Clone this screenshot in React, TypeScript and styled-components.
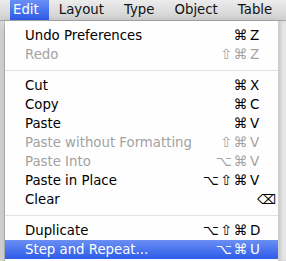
import styled, { createGlobalStyle } from "styled-components";

const GlobalStyle = createGlobalStyle`
  html, body {
    margin: 0;
    padding: 0;
    width: 286px;
    height: 261px;
    overflow: hidden;
    background: #e2e2e2;
  }
  * { box-sizing: border-box; }
`;

const font = `"DejaVu Sans", "Liberation Sans", sans-serif`;
const selection = "linear-gradient(#6a8ff4, #2d5ce8)";

const Screen = styled.div`
  width: 286px;
  height: 261px;
  display: flex;
  flex-direction: column;
  font-family: ${font};
  font-size: 13.3px;
  overflow: hidden;
`;

const MenuBar = styled.div`
  height: 21px;
  flex: none;
  display: flex;
  align-items: stretch;
  padding-left: 10px;
  background: linear-gradient(#ececec, #d0d0d0);
  border-bottom: 1px solid #a9a9a9;
`;

const BarItem = styled.div<{ active?: boolean }>`
  display: flex;
  align-items: center;
  padding: 0 10px 1px ${({ active }) => (active ? "3px" : "10px")};
  color: ${({ active }) => (active ? "#fff" : "#111")};
  background: ${({ active }) => (active ? selection : "transparent")};
  font-size: 13.3px;
`;

const Desk = styled.div`
  flex: 1;
  display: grid;
  grid-template-columns: 5px 273px 1fr;
  min-height: 0;
`;

const Gutter = styled.div`
  background: linear-gradient(90deg, #d6d6d6, #e4e4e4);
  border-right: 1px solid #c4c4c4;
`;

const Strip = styled.div`
  background: #e6e6e6;
  border-left: 1px solid #cfcfcf;
  box-shadow: inset 2px 0 3px rgba(0, 0, 0, 0.12);
`;

const Menu = styled.div`
  background: rgba(255, 255, 255, 0.97);
  padding-top: 5px;
  box-shadow: 0 3px 8px rgba(0, 0, 0, 0.3);
  display: flex;
  flex-direction: column;
`;

const Item = styled.div<{ disabled?: boolean; selected?: boolean }>`
  height: 19px;
  display: flex;
  align-items: center;
  justify-content: space-between;
  padding: 0 13px 0 20px;
  color: ${({ disabled, selected }) =>
    selected ? "#fff" : disabled ? "#a2a2a2" : "#000"};
  background: ${({ selected }) => (selected ? selection : "transparent")};
  line-height: 19px;
  white-space: nowrap;
`;

const Separator = styled.div`
  height: 12px;
  display: flex;
  align-items: center;
  &::after {
    content: "";
    flex: 1;
    height: 1px;
    background: #e1e1e1;
  }
`;

const Shortcut = styled.div`
  display: flex;
  align-items: center;
`;

const Mods = styled.span`
  letter-spacing: 1.5px;
  font-size: 14px;
`;

const Key = styled.span<{ shift?: number }>`
  width: 16px;
  padding-left: ${({ shift }) => shift ?? 1}px;
  font-size: 13.5px;
`;

type Entry =
  | { sep: true }
  | {
      label: string;
      mods?: string;
      keyName: string;
      disabled?: boolean;
      selected?: boolean;
      shift?: number;
    };

const entries: Entry[] = [
  { label: "Undo Preferences", mods: "⌘", keyName: "Z" },
  { label: "Redo", mods: "⇧⌘", keyName: "Z", disabled: true },
  { sep: true },
  { label: "Cut", mods: "⌘", keyName: "X" },
  { label: "Copy", mods: "⌘", keyName: "C" },
  { label: "Paste", mods: "⌘", keyName: "V" },
  { label: "Paste without Formatting", mods: "⇧⌘", keyName: "V", disabled: true },
  { label: "Paste Into", mods: "⌥⌘", keyName: "V", disabled: true },
  { label: "Paste in Place", mods: "⌥⇧⌘", keyName: "V" },
  { label: "Clear", keyName: "⌫", shift: 8 },
  { sep: true },
  { label: "Duplicate", mods: "⌥⇧⌘", keyName: "D" },
  { label: "Step and Repeat...", mods: "⌥⌘", keyName: "U", selected: true },
];

export default function App() {
  return (
    <Screen>
      <GlobalStyle />
      <MenuBar>
        <BarItem active>Edit</BarItem>
        <BarItem>Layout</BarItem>
        <BarItem>Type</BarItem>
        <BarItem>Object</BarItem>
        <BarItem>Table</BarItem>
      </MenuBar>
      <Desk>
        <Gutter />
        <Menu>
          {entries.map((e, i) =>
            "sep" in e ? (
              <Separator key={i} />
            ) : (
              <Item key={i} disabled={e.disabled} selected={e.selected}>
                <span>{e.label}</span>
                <Shortcut>
                  <Mods>{e.mods}</Mods>
                  <Key shift={e.shift}>{e.keyName}</Key>
                </Shortcut>
              </Item>
            )
          )}
        </Menu>
        <Strip />
      </Desk>
    </Screen>
  );
}
